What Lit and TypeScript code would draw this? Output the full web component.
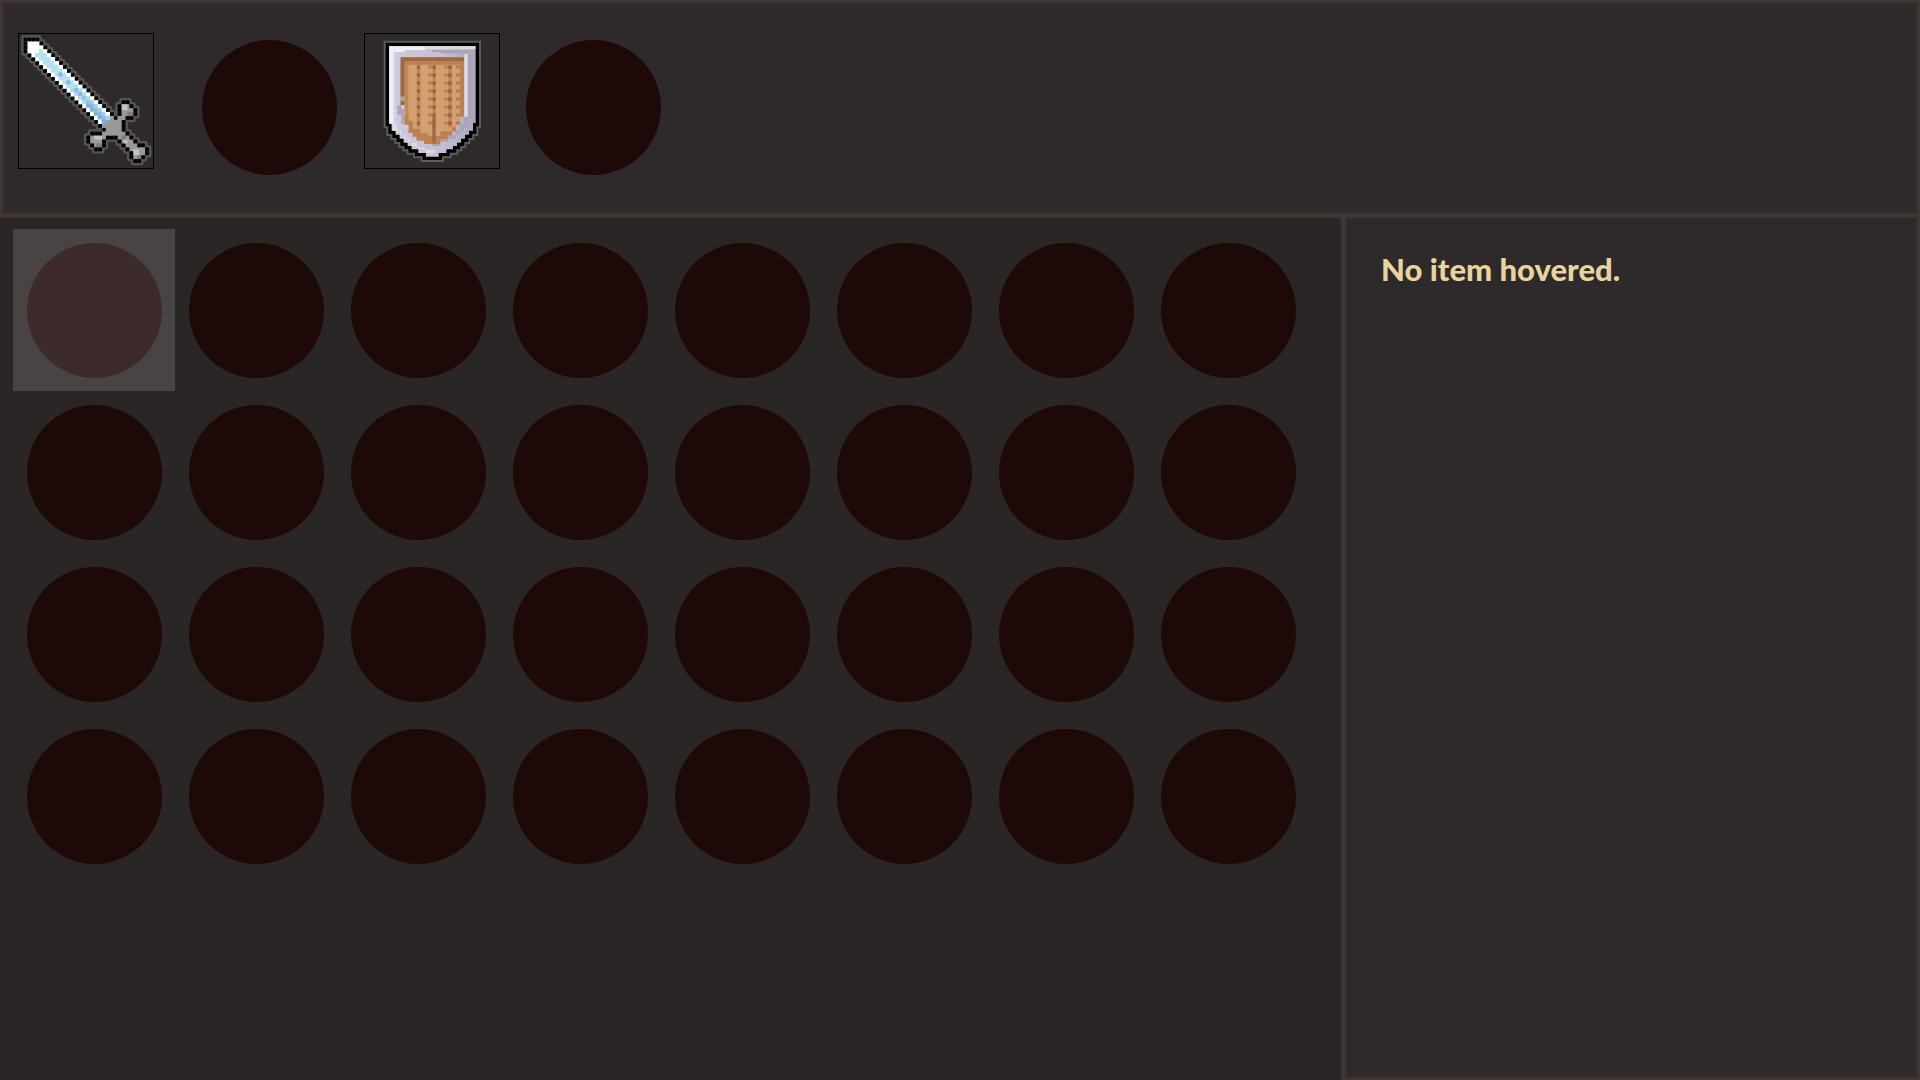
import { LitElement, html, svg, css } from "lit";
import { customElement, state } from "lit/decorators.js";

type Cell = [number, number];

/* Upper half of the sword outline; the lower half mirrors it over the diagonal. */
const half: Cell[] = [[0, 0], [1, 0], [2, 0], [3, 0]];
for (let row = 1; row <= 19; row++) half.push([row + 3, row]);
half.push(
  [23, 20], [24, 19], [24, 18], [24, 17], [25, 16], [26, 16], [27, 17], [28, 18],
  [28, 19], [27, 20], [26, 20], [25, 21], [25, 22], [25, 23], [26, 24], [27, 25],
  [28, 26], [29, 27], [30, 27], [31, 28], [31, 29], [30, 30],
);
const outline: Cell[] = [...half, ...half.filter(([c, r]) => c !== r).map(([c, r]): Cell => [r, c])];

const blade: Cell[] = [];
for (let c = 1; c <= 22; c++) {
  for (let r = 1; r <= 22; r++) {
    if (Math.abs(c - r) <= 2 && c + r <= 41) blade.push([c, r]);
  }
}

function bladeColor(c: number, r: number): string {
  const along = c + r;
  if (Math.abs(c - r) === 2 || along <= 6) return "#ffffff";
  if (c === r && [18, 22, 26, 28].includes(along)) return "#86b9df";
  if (along > 32) return c < r ? "#7fb0da" : c === r ? "#8bbbe0" : "#a5d0ea";
  if (along > 24) return c === r ? "#93c3e4" : "#b0dcee";
  return "#b5e1f0";
}

const sword = svg`
  <svg class="art" viewBox="24 27 408 408" aria-hidden="true">
    <defs>
      <filter id="soft" x="-5%" y="-5%" width="110%" height="110%">
        <feGaussianBlur stdDeviation="2.2"></feGaussianBlur>
      </filter>
    </defs>
    <g filter="url(#soft)">
      <g transform="translate(41 41) scale(11.75)">
        ${outline.map(([c, r]) => svg`<rect x=${c - 0.6} y=${r - 0.6} width="2.2" height="2.2" rx="0.6" fill="#575556"></rect>`)}
        ${outline.map(([c, r]) => svg`<rect x=${c - 0.05} y=${r - 0.05} width="1.1" height="1.1" rx="0.3" fill="#2a2727"></rect>`)}
        <path fill="#999999" d="M21 24 L24 21 V20 H25 V17 H27 V18 H28 V20 H26 V21 H25 V24 H26 V25 H27 V26 H28 V27 H29 V28 H31 V30 H30 V31 H28 V29 H27 V28 H26 V27 H25 V26 H24 V25 H21 V26 H20 V28 H18 V27 H17 V25 H20 V24 Z"></path>
        <path fill="#999999" d="M20 22 L22 20 H25 V25 H20 Z"></path>
        <path fill="#c4c4c4" d="M25 17 H26.5 V18.5 H25 Z M18 25 H20 V26 H18 Z M25.5 26 H26.5 V27 H25.5 Z M28 28.5 H29.5 V30 H28 Z"></path>
        <path fill="#7c7c7c" d="M26.5 19 H28 V20 H26.5 Z M18.5 27 H20 V28 H18.5 Z M29 30 H30 V31 H29 Z M25 25 H26 V26 H25 Z"></path>
        ${blade.map(([c, r]) => svg`<rect x=${c - 0.1} y=${r - 0.1} width="1.2" height="1.2" fill=${bladeColor(c, r)}></rect>`)}
        ${outline.map(([c, r]) => svg`<rect x=${c + 0.05} y=${r + 0.05} width="0.9" height="0.9" fill="#040404"></rect>`)}
      </g>
    </g>
  </svg>`;

const shieldEdge =
  "M97 61 H367 V302 H359 V325 H347 V337 H335 V349 H323 V361 H311 V371 H299 V381 H279 V392 H256 V403 H208 V392 H185 V381 H165 V371 H153 V361 H141 V349 H129 V337 H117 V325 H105 V302 H97 Z";
const stitchRows = Array.from({ length: 8 }, (_, i) => 130 + i * 24);

const shield = svg`
  <svg class="art" viewBox="27 27 408 408" aria-hidden="true">
    <defs>
      <filter id="soften" x="-5%" y="-5%" width="110%" height="110%">
        <feGaussianBlur stdDeviation="2.2"></feGaussianBlur>
      </filter>
      <linearGradient id="rim" x1="0" x2="1" y1="0" y2="0">
        <stop offset="0" stop-color="#e6e3ef"></stop>
        <stop offset="0.12" stop-color="#cdc8da"></stop>
        <stop offset="0.6" stop-color="#c5c0d3"></stop>
        <stop offset="1" stop-color="#aaa4b9"></stop>
      </linearGradient>
    </defs>
    <g filter="url(#soften)">
      <path d=${shieldEdge} fill="none" stroke="#5c5a5b" stroke-width="22"></path>
      <path d=${shieldEdge} fill="url(#rim)" stroke="#050505" stroke-width="10"></path>
      <path fill="#f0eef6" d="M103 67 H210 V78 H150 V84 H115 V300 H103 Z"></path>
      <path fill="#dedbe8" d="M210 67 H361 V76 H210 Z"></path>
      <path fill="#a9a3b7" d="M232 78 H338 V88 H256 V84 H232 Z M340 90 H350 V284 H338 V308 H326 V320 H314 V332 H302 V344 H280 V354 H256 V366 H232 V358 H256 V346 H280 V334 H302 V320 H314 V302 H326 V278 H340 Z"></path>
      <path fill="#dedbe8" d="M328 90 H338 V278 H328 Z M115 300 H127 V320 H139 V332 H151 V344 H163 V356 H185 V370 H208 V378 H240 V386 H213 V376 H190 V366 H170 V356 H158 V345 H146 V333 H134 V321 H115 Z"></path>
      <path fill="#aaa4b8" d="M127 244 H139 V256 H148 V300 H139 V272 H127 Z"></path>
      <path fill="#d2a071" d="M137 100 H327 V278 H315 V302 H303 V322 H291 V334 H279 V346 H256 V360 H208 V350 H185 V338 H173 V326 H161 V302 H149 V242 H137 Z"></path>
      <path fill="#bd8055" d="M137 112 H327 V122 H149 V242 H137 Z M315 122 H327 V278 H315 Z M149 272 H161 V290 H173 V314 H197 V328 H220 V336 H256 V322 H291 V310 H303 V322 H291 V334 H279 V346 H256 V360 H208 V350 H185 V338 H173 V326 H161 V302 H149 Z"></path>
      <path fill="#9f6742" d="M137 100 H327 V112 H149 V216 H137 Z M137 232 H149 V243 H137 Z M232 270 H242 V358 H232 Z"></path>
      <path fill="#aaa4b8" d="M137 219 H150 V230 H137 Z"></path>
      <path fill="#c28759" d="M185 122 H196 V310 H185 Z M232 112 H243 V280 H232 Z M279 122 H291 V310 H279 Z M149 122 H160 V270 H149 Z"></path>
      ${stitchRows.map(
        (y) => svg`
          <rect x="186" y=${y - 6} width="9" height="11" fill="#99623f"></rect>
          <rect x="233" y=${y - 6} width="9" height="11" fill="#99623f"></rect>
          <rect x="220" y=${y - 6} width="12" height="10" fill="#b97e54"></rect>
          <rect x="280" y=${y - 6} width="10" height="11" fill="#99623f"></rect>
          <rect x="267" y=${y - 6} width="12" height="10" fill="#bf865b"></rect>
          <rect x="303" y=${y - 6} width="12" height="10" fill="#b97e54"></rect>`,
      )}
    </g>
  </svg>`;

@customElement("app-root")
export class AppRoot extends LitElement {
  @state() private selected = 0;

  static styles = css`
    :host {
      display: block;
      --line: #3f3533;
      --panel: #2e2a2b;
      --slot: #1d0908;
    }
    * {
      box-sizing: border-box;
    }
    button {
      display: block;
      padding: 0;
      border: 0;
      background: none;
      cursor: pointer;
    }
    .screen {
      display: grid;
      grid-template-columns: minmax(0, 7fr) minmax(0, 3fr);
      grid-template-rows: auto 1fr;
      min-height: 100vh;
      background: #2a2625;
    }
    .equipment {
      grid-column: 1 / -1;
      display: flex;
      flex-wrap: wrap;
      align-items: flex-start;
      padding: 30px 15px 38px;
      border: 3px solid var(--line);
      border-bottom-width: 5px;
      background: var(--panel);
    }
    .pair {
      display: flex;
      align-items: flex-end;
    }
    .weapon {
      gap: 48px;
      margin-right: 27px;
    }
    .guard {
      gap: 26px;
    }
    .equipped {
      width: 136px;
      height: 136px;
      margin-bottom: 6px;
      outline: 1px solid #000;
      outline-offset: -1px;
    }
    .art {
      display: block;
      width: 100%;
      height: 100%;
    }
    .disc {
      display: block;
      width: 135px;
      height: 135px;
      border-radius: 50%;
      background: var(--slot);
    }
    .bag {
      display: grid;
      grid-template-columns: repeat(auto-fill, 162px);
      align-content: start;
      padding: 11px 0 13px 13px;
    }
    .cell {
      padding: 14px 13px 13px 14px;
      position: relative;
    }
    .cell.selected::after {
      content: "";
      position: absolute;
      inset: 0;
      background: rgba(255, 255, 255, 0.14);
    }
    .details {
      margin-left: -3px;
      padding: 31px 35px;
      border: 3px solid var(--line);
      border-top: 0;
      border-left-width: 5px;
      background: var(--panel);
    }
    .message {
      margin: 0;
      color: #e8d49c;
      font: 900 31px/40px Lato, "Liberation Sans", sans-serif;
    }
  `;

  render() {
    return html`
      <main class="screen">
        <section class="equipment" aria-label="Equipment">
          <div class="pair weapon">
            <button class="equipped" aria-label="Sword">${sword}</button>
            <button class="disc" aria-label="Empty equipment slot"></button>
          </div>
          <div class="pair guard">
            <button class="equipped" aria-label="Shield">${shield}</button>
            <button class="disc" aria-label="Empty equipment slot"></button>
          </div>
        </section>
        <section class="bag" aria-label="Inventory">
          ${Array.from(
            { length: 32 },
            (_, i) => html`
              <button
                class="cell ${i === this.selected ? "selected" : ""}"
                aria-label="Slot ${i + 1}"
                @click=${() => (this.selected = i)}
              ><span class="disc"></span></button>`,
          )}
        </section>
        <aside class="details" aria-label="Item details">
          <p class="message">No item hovered.</p>
        </aside>
      </main>
    `;
  }
}
